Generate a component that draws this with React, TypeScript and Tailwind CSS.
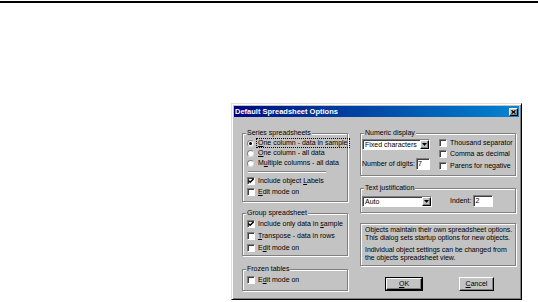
import React from 'react';

const raised =
  'border border-t-white border-l-white border-r-black border-b-black shadow-[inset_-1px_-1px_0_#808080]';
const sunken =
  'bg-white border border-t-[#808080] border-l-[#808080] border-r-white border-b-white shadow-[inset_1px_1px_0_#404040]';
const etched = 'border border-[#808080] shadow-[1px_1px_0_#fff,inset_1px_1px_0_#fff]';

function U({ children }: { children: React.ReactNode }) {
  return <span className="underline underline-offset-[1px]">{children}</span>;
}

function Check({ checked, children }: { checked?: boolean; children: React.ReactNode }) {
  return (
    <div className="flex items-center gap-[3px] h-full">
      <div className={`w-[8px] h-[8px] shrink-0 flex items-center justify-center ${sunken}`}>
        {checked && (
          <svg width="6" height="6" viewBox="0 0 7 7">
            <path d="M0.5 3 L2.5 5 L6.5 1" stroke="#000" strokeWidth="1.6" fill="none" />
          </svg>
        )}
      </div>
      <span>{children}</span>
    </div>
  );
}

function Radio({ checked, focus, children }: { checked?: boolean; focus?: boolean; children: React.ReactNode }) {
  return (
    <div className="flex items-center gap-[4px] h-full">
      <div className="w-[7px] h-[7px] shrink-0 rounded-full bg-white border border-t-[#808080] border-l-[#808080] border-r-[#e0e0e0] border-b-[#e0e0e0] flex items-center justify-center">
        {checked && <div className="w-[3px] h-[3px] rounded-full bg-black" />}
      </div>
      <span className={focus ? 'outline outline-1 outline-dotted outline-black -ml-[1px] px-[1px]' : ''}>
        {children}
      </span>
    </div>
  );
}

function Group({
  title,
  className,
  children,
}: {
  title: string;
  className?: string;
  children: React.ReactNode;
}) {
  return (
    <div className={`relative ${etched} ${className ?? ''}`}>
      <span className="absolute -top-[5px] left-[3px] px-[1px] leading-[8px] bg-[#c3c3c3]">{title}</span>
      {children}
    </div>
  );
}

function Select({ value, width }: { value: string; width: string }) {
  return (
    <div className={`${width} h-[11px] flex items-stretch ${sunken}`}>
      <span className="flex-1 pl-[2px] leading-[9px] overflow-hidden">{value}</span>
      <div className={`w-[9px] bg-[#c3c3c3] flex items-center justify-center ${raised}`}>
        <svg width="5" height="3" viewBox="0 0 5 3">
          <path d="M0 0 H5 L2.5 3 Z" fill="#000" />
        </svg>
      </div>
    </div>
  );
}

export default function App() {
  return (
    <div className="min-h-screen bg-white text-black text-[7px] leading-[8px] whitespace-nowrap font-['Liberation_Sans',Arial,sans-serif]">
      <div className="pt-[1px]">
        <div className="h-[2px] bg-black" />
      </div>

      <div className="ml-[231px] mt-[100px] w-[291px] h-[197px] bg-[#c3c3c3] p-[2px] flex flex-col border border-t-[#dfdfdf] border-l-[#dfdfdf] border-r-black border-b-black shadow-[inset_1px_1px_0_#fff,inset_-1px_-1px_0_#808080]">
        <div className="h-[11px] shrink-0 bg-gradient-to-r from-[#000080] to-[#1084d0] flex items-center justify-between pl-[1px] pr-[1px]">
          <span className="text-white font-bold text-[7.5px]">Default Spreadsheet Options</span>
          <div className={`w-[9px] h-[8px] bg-[#c3c3c3] flex items-center justify-center ${raised}`}>
            <svg width="5" height="4" viewBox="0 0 5 4">
              <path d="M0.5 0.3 L4.5 3.7 M4.5 0.3 L0.5 3.7" stroke="#000" strokeWidth="1.2" />
            </svg>
          </div>
        </div>

        <div className="flex gap-[12px] pl-[8px] pt-[16px]">
          {/* left column */}
          <div className="w-[106px] flex flex-col">
            <Group title="Series spreadsheets" className="px-[4px] pt-[4px] pb-[4px]">
              <div className="h-[10px]">
                <Radio checked focus>
                  <U>O</U>ne column - data in sample
                </Radio>
              </div>
              <div className="h-[10px]">
                <Radio>
                  <U>O</U>ne column - all data
                </Radio>
              </div>
              <div className="h-[10px]">
                <Radio>
                  M<U>u</U>ltiple columns - all data
                </Radio>
              </div>
              <div className="mt-[3px] mb-[2px] ml-[1px] w-[78px] h-[2px] border-t border-t-[#808080] border-b border-b-white" />
              <div className="h-[11px]">
                <Check checked>
                  Include object <U>L</U>abels
                </Check>
              </div>
              <div className="h-[11px]">
                <Check>
                  <U>E</U>dit mode on
                </Check>
              </div>
            </Group>

            <Group title="Group spreadsheet" className="mt-[11px] px-[4px] pt-[4px] pb-[1px]">
              <div className="h-[12px]">
                <Check checked>
                  Include only data in <U>s</U>ample
                </Check>
              </div>
              <div className="h-[12px]">
                <Check>
                  <U>T</U>ranspose - data in rows
                </Check>
              </div>
              <div className="h-[12px]">
                <Check>
                  E<U>d</U>it mode on
                </Check>
              </div>
            </Group>

            <Group title="Frozen tables" className="mt-[13px] px-[4px] pt-[4px] pb-[4px]">
              <div className="h-[12px]">
                <Check>
                  E<U>d</U>it mode on
                </Check>
              </div>
            </Group>
          </div>

          {/* right column */}
          <div className="w-[156px] flex flex-col">
            <Group title="Numeric display" className="pl-[1px] pt-[3px] pb-[4px] flex">
              <div className="w-[70px] flex flex-col">
                <div className="mt-[2px]">
                  <Select value="Fixed characters" width="w-[68px]" />
                </div>
                <div className="mt-[8px] h-[12px] flex items-center">
                  <span>Number of digits:</span>
                  <div className={`ml-[1px] w-[14px] h-[12px] leading-[10px] pl-[1px] ${sunken}`}>7</div>
                </div>
              </div>
              <div className="ml-[7px] flex flex-col">
                <div className="h-[11px]">
                  <Check>Thousand separator</Check>
                </div>
                <div className="h-[12px]">
                  <Check>Comma as decimal</Check>
                </div>
                <div className="h-[11px]">
                  <Check>Parens for negative</Check>
                </div>
              </div>
            </Group>

            <Group title="Text justification" className="mt-[12px] pl-[1px] pt-[6px] pb-[5px] flex items-center">
              <Select value="Auto" width="w-[70px]" />
              <span className="ml-[18px]">Indent:</span>
              <div className={`ml-[2px] w-[20px] h-[12px] leading-[10px] pl-[1px] ${sunken}`}>2</div>
            </Group>

            <div className={`mt-[10px] h-[43px] ${etched} pl-[4px] pt-[2px] tracking-[-0.05px]`}>
              <p>Objects maintain their own spreadsheet options.</p>
              <p>This dialog sets startup options for new objects.</p>
              <p className="mt-[4px]">Individual object settings can be changed from</p>
              <p>the objects spreadsheet view.</p>
            </div>

            <div className="mt-[11px] pl-[25px] flex gap-[36px]">
              <div className="w-[38px] h-[14px] border border-black">
                <div className={`w-full h-full flex items-center justify-center ${raised}`}>
                  <span>
                    <U>O</U>K
                  </span>
                </div>
              </div>
              <div className={`w-[35px] h-[14px] flex items-center justify-center ${raised}`}>
                <span>
                  <U>C</U>ancel
                </span>
              </div>
            </div>
          </div>
        </div>
      </div>
    </div>
  );
}
